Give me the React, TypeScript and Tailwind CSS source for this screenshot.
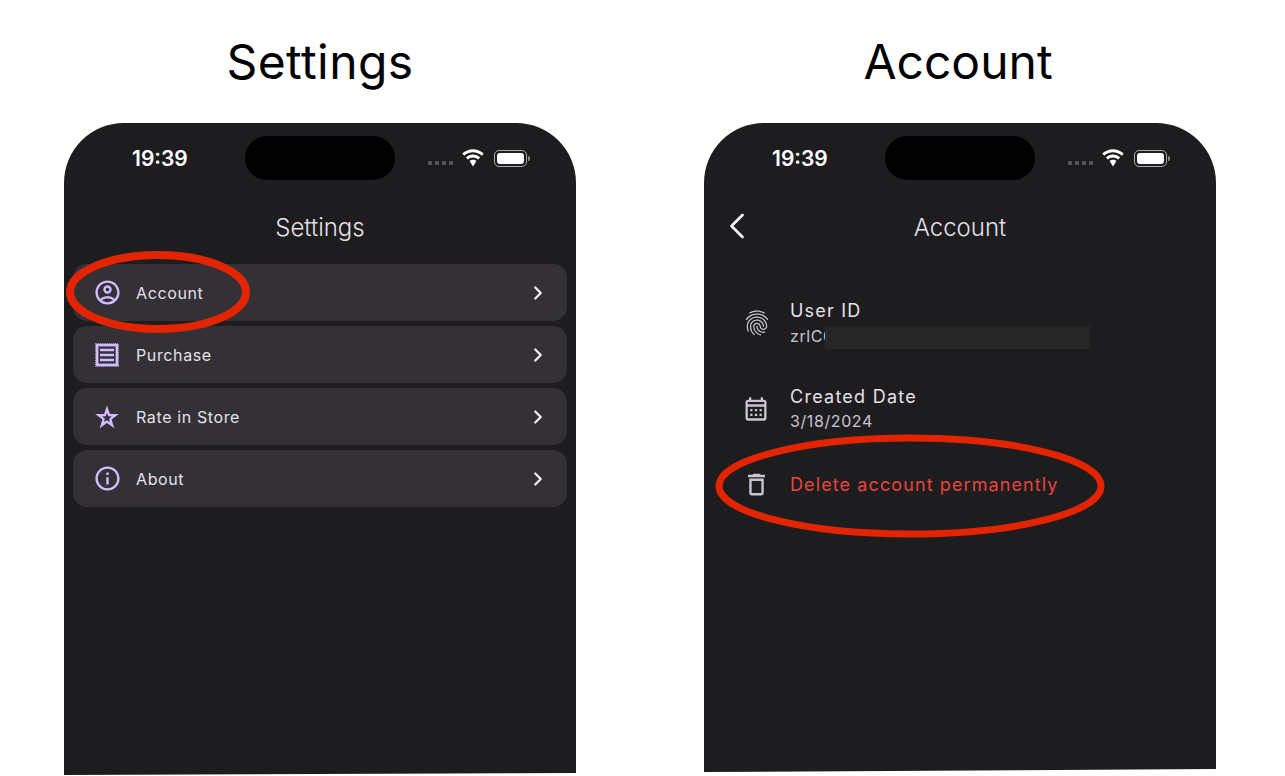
import React from "react";
import { ChevronLeft, ChevronRight } from "lucide-react";
import {
  MdOutlineAccountCircle,
  MdOutlineCalendarMonth,
  MdOutlineDelete,
  MdOutlineFingerprint,
  MdOutlineInfo,
} from "react-icons/md";

const ReceiptIcon = () => (
  <svg width="24" height="24" viewBox="0 0 24 24" fill="none" stroke="#d0bcff">
    <rect x="0.8" y="0.8" width="22.4" height="22.4" strokeWidth="1.2" strokeDasharray="1.2 0.7" />
    <rect x="2.200" y="2.200" width="19.600" height="19.600" strokeWidth="2.400" />
    <path d="M5 7h14M5 12h14M5 17h14" strokeWidth="2.400" />
  </svg>
);

const StarIcon = () => (
  <svg width="24" height="24" viewBox="0 0 24 24" fill="#d0bcff" fillRule="evenodd">
    <path d="M12 0.500L14.900 9.100L23.800 9.100L16.600 14.400L19.300 23.300L12 17.900L4.700 23.300L7.400 14.400L0.200 9.100L9.100 9.100ZM12 8L13.300 11.300L16.800 11.500L14.100 13.700L14.900 17.100L12 15.200L9.100 17.100L9.900 13.700L7.200 11.500L10.700 11.300Z" />
  </svg>
);

const SETTINGS = [
  { label: "Account", icon: <MdOutlineAccountCircle size={29} color="#d0bcff" /> },
  { label: "Purchase", icon: <ReceiptIcon /> },
  { label: "Rate in Store", icon: <StarIcon /> },
  { label: "About", icon: <MdOutlineInfo size={29} color="#d0bcff" /> },
];

const WifiIcon = () => (
  <svg width="24" height="18" viewBox="0 0 24 18" fill="#fff">
    <path d="M12 3.200c3.400 0 6.500 1.300 8.800 3.500l1.900-2.100C19.900 1.900 16.100.3 12 .3S4.100 1.900 1.300 4.600l1.900 2.100C5.500 4.500 8.600 3.200 12 3.200z" />
    <path d="M12 8.400c2 0 3.800.8 5.200 2l1.900-2.100C17.200 6.600 14.700 5.500 12 5.500S6.800 6.600 4.900 8.300l1.900 2.100c1.400-1.200 3.200-2 5.200-2z" />
    <path d="M12 10.700c-1.300 0-2.500.5-3.400 1.300L12 17.400l3.400-5.400c-.9-.8-2.100-1.300-3.400-1.300z" />
  </svg>
);

const StatusBar = () => (
  <div className="flex items-start h-[57px] pt-[13px]">
    <div className="w-[181px] pl-[68px] pt-[9px] text-[21px] leading-[28px] font-semibold text-white">19:39</div>
    <div className="w-[150px] h-[44px] rounded-full bg-black" />
    <div className="flex items-center pl-[33px] pt-[12px] h-[32px]">
      <div className="flex gap-[3px] mt-[9px]">
        <div className="w-[4px] h-[4px] rounded-[1px] bg-[#58565a]" />
        <div className="w-[4px] h-[4px] rounded-[1px] bg-[#58565a]" />
        <div className="w-[4px] h-[4px] rounded-[1px] bg-[#58565a]" />
        <div className="w-[4px] h-[4px] rounded-[1px] bg-[#58565a]" />
      </div>
      <div className="ml-[8px]">
        <WifiIcon />
      </div>
      <div className="ml-[9px] flex items-center">
        <div className="w-[33px] h-[17px] rounded-[5px] border border-[#a9a9a9] p-[2px]">
          <div className="w-full h-full rounded-[3px] bg-white" />
        </div>
        <div className="w-[2px] h-[5px] ml-[1px] rounded-r-full bg-[#8a8a8a]" />
      </div>
    </div>
  </div>
);

const Phone = ({ clip, children }: { clip: string; children: React.ReactNode }) => (
  <div className={`w-[512px] h-[653px] ${clip}`}>
    <div className="w-full h-full bg-[#1d1c1f] rounded-t-[60px] overflow-hidden">
      <StatusBar />
      {children}
    </div>
  </div>
);

const DetailRow = ({
  icon,
  title,
  value,
  titleClass,
  valueClass,
}: {
  icon: React.ReactNode;
  title: string;
  value: string;
  titleClass: string;
  valueClass: string;
}) => (
  <div className="flex items-center h-[60px]">
    <div className="w-[86px] pl-[38px] flex items-center text-[#cac4d0]">{icon}</div>
    <div>
      <div className={`text-[18px] leading-[24px] text-[#e6e0e9] ${titleClass}`}>{title}</div>
      <div className={`text-[16px] leading-[24px] text-[#cac4d0] ${valueClass}`}>{value}</div>
    </div>
  </div>
);

export default function App() {
  return (
    <div className="relative w-[1285px] h-[776px] bg-white overflow-hidden font-['Inter',sans-serif] flex gap-[128px] pl-[64px]">
      {/* SETTINGS SCREEN */}
      <div className="w-[512px]">
        <h1 className="h-[123px] flex items-center justify-center text-[48px] tracking-[0.4px] text-black">Settings</h1>
        <Phone clip="[clip-path:polygon(0_0,100%_0,100%_650px,0_652px)]">
          <div className="h-[84px] pt-[31px] text-center text-[24px] leading-[34px] font-light text-[#e6e0e9]">
            Settings
          </div>
          <div className="flex flex-col gap-[5px] pl-[9px] pr-[9px]">
            {SETTINGS.map((item) => (
              <div key={item.label} className="flex items-center h-[57px] rounded-[14px] bg-[#333135]">
                <div className="w-[63px] pl-[5px] flex items-center justify-center">{item.icon}</div>
                <div className="flex-1 text-[16px] tracking-[0.62px] text-[#e6e0e9]">{item.label}</div>
                <ChevronRight size={22} strokeWidth={2.5} color="#f3eff5" className="mr-[18px]" />
              </div>
            ))}
          </div>
        </Phone>
      </div>

      {/* ACCOUNT SCREEN */}
      <div className="w-[512px]">
        <h1 className="h-[123px] pr-[4px] flex items-center justify-center text-[48px] text-black">Account</h1>
        <Phone clip="[clip-path:polygon(0_0,100%_0,100%_646px,0_649px)]">
          <div className="relative h-[85px] pt-[31px] text-center text-[24px] leading-[34px] font-light text-[#e6e0e9]">
            Account
            <ChevronLeft size={44} strokeWidth={1.5} color="#f3eff5" className="absolute left-[11px] top-[24px]" />
          </div>
          <div className="flex flex-col pt-[28px]">
            <div className="relative">
              <DetailRow
                icon={<MdOutlineFingerprint size={30} />}
                title="User ID"
                titleClass="tracking-[1.2px]"
                value="zrlC0"
                valueClass="pt-[1px] tracking-[0.6px]"
              />
              <div className="absolute left-[121px] top-[33px] w-[265px] h-[23px] bg-[#262626]" />
            </div>
            <div className="h-[26px]" />
            <DetailRow
              icon={<MdOutlineCalendarMonth size={28} />}
              title="Created Date"
              titleClass="tracking-[1.25px]"
              value="3/18/2024"
              valueClass="tracking-[0.6px]"
            />
            <div className="flex items-center h-[60px] mt-[15px]">
              <div className="w-[86px] pl-[38px] flex items-center text-[#cac4d0]">
                <MdOutlineDelete size={29} />
              </div>
              <div className="text-[18px] tracking-[1.1px] text-[#e8443d]">Delete account permanently</div>
            </div>
          </div>
        </Phone>
      </div>

      {/* red annotations drawn over both screens */}
      <svg className="absolute left-0 top-0 pointer-events-none" width="1285" height="776" fill="none" stroke="#e32400">
        <ellipse cx="158" cy="292" rx="88" ry="37" strokeWidth="8" />
        <ellipse cx="910" cy="486" rx="191" ry="48" strokeWidth="7" />
      </svg>
    </div>
  );
}
